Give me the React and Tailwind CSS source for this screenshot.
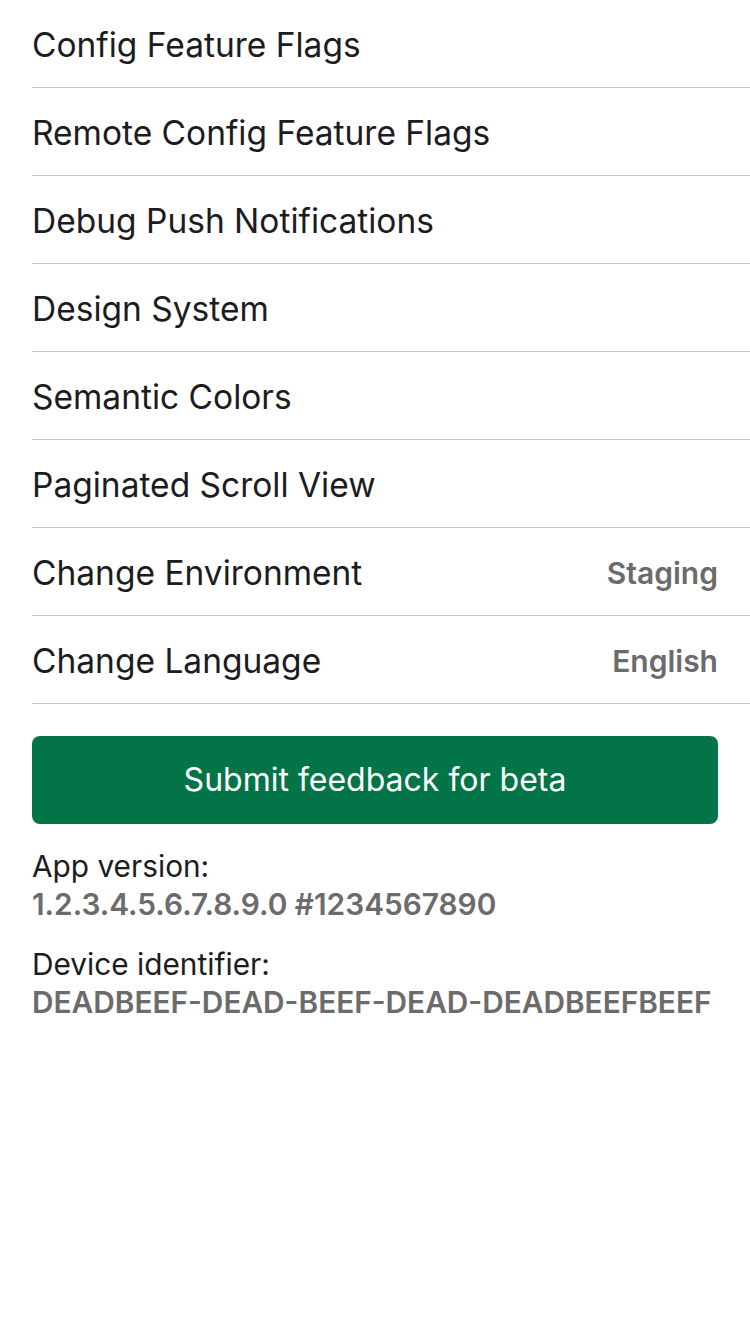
import React from "react";

const rows = [
  ["Config Feature Flags"],
  ["Remote Config Feature Flags"],
  ["Debug Push Notifications"],
  ["Design System"],
  ["Semantic Colors"],
  ["Paginated Scroll View"],
  ["Change Environment", "Staging"],
  ["Change Language", "English"],
];

export default function App() {
  return (
    <div className="min-h-[1334px] w-[750px] bg-white" style={{ fontFamily: "Inter, 'Noto Sans', sans-serif" }}>
      <div className="pl-8">
        {rows.map(([label, value]) => (
          <div key={label} className="flex h-[88px] items-center justify-between border-b border-[#c8c8cc] pr-8 pt-[3px]">
            <span className="text-[33.5px] leading-[40px] text-[#1c1c1e]">{label}</span>
            {value && <span className="text-[30px] font-semibold leading-[40px] text-[#6b6b6b]">{value}</span>}
          </div>
        ))}
      </div>
      <div className="px-8 pt-8">
        <button className="flex h-[88px] w-full items-center justify-center rounded-[8px] bg-[#037447] text-[32px] text-white">
          Submit feedback for beta
        </button>
        <div className="mt-[23px] text-[29.8px] leading-[38px]">
          <div className="text-[#1c1c1e]">App version:</div>
          <div className="font-semibold text-[#6b6b6b]">1.2.3.4.5.6.7.8.9.0 #1234567890</div>
        </div>
        <div className="mt-[22px] text-[29.8px] leading-[38px]">
          <div className="text-[#1c1c1e]">Device identifier:</div>
          <div className="font-semibold text-[#6b6b6b]">DEADBEEF-DEAD-BEEF-DEAD-DEADBEEFBEEF</div>
        </div>
      </div>
    </div>
  );
}
